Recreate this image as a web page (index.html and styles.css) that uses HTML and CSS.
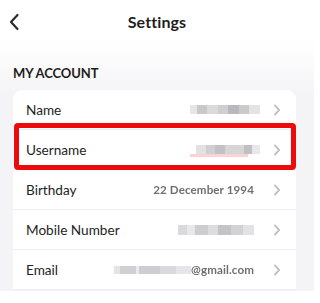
FILE: index.html
```html
<!DOCTYPE html>
<html>
<head>
<meta charset="utf-8">
<link rel="stylesheet" href="styles.css">
</head>
<body>
<div class="screen">
  <header class="topbar">
    <svg class="back" width="12" height="18" viewBox="0 0 12 18"><path d="M9.5 2 L3 9 L9.5 16" fill="none" stroke="#2b2b2b" stroke-width="2.2" stroke-linecap="round" stroke-linejoin="round"/></svg>
    <h1 class="title">Settings</h1>
  </header>
  <h2 class="section">MY ACCOUNT</h2>
  <div class="card">
    <div class="row">
      <span class="label">Name</span>
      <span class="blur blur-name"></span>
      <svg class="chev" width="8" height="12" viewBox="0 0 8 12"><path d="M2 1.5 L6.2 6 L2 10.5" fill="none" stroke="#b8b8bc" stroke-width="1.8" stroke-linecap="round" stroke-linejoin="round"/></svg>
    </div>
    <div class="row highlighted">
      <span class="label">Username</span>
      <span class="blur blur-user"></span>
      <svg class="chev" width="8" height="12" viewBox="0 0 8 12"><path d="M2 1.5 L6.2 6 L2 10.5" fill="none" stroke="#b8b8bc" stroke-width="1.8" stroke-linecap="round" stroke-linejoin="round"/></svg>
    </div>
    <div class="row">
      <span class="label">Birthday</span>
      <span class="value">22 December 1994</span>
      <svg class="chev" width="8" height="12" viewBox="0 0 8 12"><path d="M2 1.5 L6.2 6 L2 10.5" fill="none" stroke="#b8b8bc" stroke-width="1.8" stroke-linecap="round" stroke-linejoin="round"/></svg>
    </div>
    <div class="row">
      <span class="label">Mobile Number</span>
      <span class="blur blur-mobile"></span>
      <svg class="chev" width="8" height="12" viewBox="0 0 8 12"><path d="M2 1.5 L6.2 6 L2 10.5" fill="none" stroke="#b8b8bc" stroke-width="1.8" stroke-linecap="round" stroke-linejoin="round"/></svg>
    </div>
    <div class="row">
      <span class="label">Email</span>
      <span class="value email"><span class="blur blur-email"></span>@gmail.com</span>
      <svg class="chev" width="8" height="12" viewBox="0 0 8 12"><path d="M2 1.5 L6.2 6 L2 10.5" fill="none" stroke="#b8b8bc" stroke-width="1.8" stroke-linecap="round" stroke-linejoin="round"/></svg>
    </div>
  </div>
</div>
</body>
</html>
```
FILE: styles.css
```css
html, body {
  margin: 0;
  padding: 0;
  background: #ffffff;
  font-family: "Lato", "Noto Sans", sans-serif;
}

.screen {
  width: 314px;
  background: linear-gradient(to bottom, #ffffff 0px, #ffffff 40px, #f4f4f6 95px);
  padding-bottom: 1px;
}

.topbar {
  height: 42px;
  display: flex;
  align-items: center;
  justify-content: center;
  position: relative;
}

.back {
  position: absolute;
  left: 8px;
  top: 13px;
}

.title {
  margin: 0;
  font-size: 16px;
  font-weight: 700;
  color: #1e1e1e;
  letter-spacing: 0.1px;
}

.section {
  margin: 24px 0 10px 13px;
  font-size: 13px;
  font-weight: 700;
  color: #1e1e1e;
  line-height: 14px;
  letter-spacing: -0.1px;
}

.card {
  margin: 0 18px 0 13px;
  background: #ffffff;
  border-radius: 9px 9px 0 0;
}

.row {
  height: 39px;
  border-bottom: 1px solid #efeff1;
  display: flex;
  align-items: center;
  padding: 0 14px 0 13px;
  position: relative;
}

.label {
  flex: 1;
  font-size: 13.6px;
  color: #242424;
}

.value {
  font-size: 11.6px;
  color: #555558;
  font-weight: 700;
  letter-spacing: 0.1px;
  opacity: 0.85;
}

.chev {
  margin-left: 19px;
  margin-right: 1px;
  flex: none;
}

.blur {
  display: inline-block;
  height: 9px;
  filter: blur(0.6px);
}

.blur-name {
  width: 70px;
  margin-right: -6px;
  background: linear-gradient(to right, #e6e6e8 0 10%, #c9c9cc 10% 25%, #dadadc 25% 40%, #cfcfd2 40% 55%, #b9b9bd 55% 70%, #cacacd 70% 85%, #e4e4e6 85% 100%);
}

.blur-user {
  width: 64px;
  margin-right: -6px;
  background: linear-gradient(to right, #e2e2e4 0 15%, #d0d0d3 15% 30%, #c2c2c6 30% 45%, #d6d6d8 45% 75%, #c0c0c4 75% 88%, #e8e8ea 88% 100%);
  box-shadow: -9px 6px 0 -3px #fbd3d5;
}

.blur-mobile {
  width: 76px;
  height: 10px;
  background: linear-gradient(to right, #dadadc 0 12%, #e8e8ea 12% 22%, #cdcdd0 22% 40%, #dcdcde 40% 52%, #c4c4c8 52% 70%, #d2d2d5 70% 85%, #e2e2e4 85% 100%);
}

.email {
  display: flex;
  align-items: center;
}

.blur-email {
  width: 77px;
  height: 8px;
  background: linear-gradient(to right, #e0e0e2 0 8%, #c8c8cc 8% 28%, #e6e6e8 28% 33%, #c6c6ca 33% 60%, #d4d4d7 60% 80%, #e2e2e4 80% 100%);
}

.highlighted::after {
  content: "";
  position: absolute;
  top: -7px;
  bottom: -1px;
  left: 1px;
  right: 0;
  border: 5px solid #ee0a0a;
  border-radius: 4px;
}
```
